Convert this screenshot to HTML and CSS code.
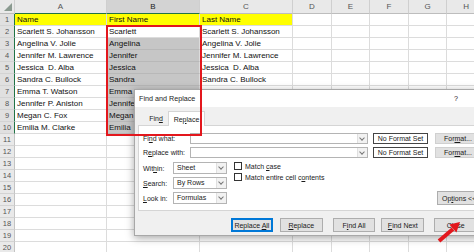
FILE: index.html
```html
<!DOCTYPE html>
<html lang="en">
<head>
	<meta name="viewport" content="width=device-width, initial-scale=1">
	<title>Find and Replace</title>
	<link rel="stylesheet" href="styles.css">
</head>
<body>

<table class="sheet">
	<colgroup>
		<col class="c-hd"><col class="c-wide"><col class="c-wide"><col class="c-wide">
		<col class="c-nar"><col class="c-nar"><col class="c-nar"><col class="c-nar"><col class="c-nar"><col class="c-last">
	</colgroup>
	<thead>
		<tr>
			<th class="corner"><span class="tri"></span></th>
			<th class="sel">A</th><th class="sel dark">B</th><th>C</th><th>D</th><th>E</th><th>F</th><th>G</th><th>H</th><th></th>
		</tr>
	</thead>
	<tbody>
		<tr class="on"><th>1</th><td class="hl">Name</td><td class="hl">First Name</td><td class="hl">Last Name</td><td></td><td></td><td></td><td></td><td></td><td></td></tr>
		<tr class="on"><th>2</th><td>Scarlett S. Johansson</td><td>Scarlett</td><td>Scarlett S. Johansson</td><td></td><td></td><td></td><td></td><td></td><td></td></tr>
		<tr class="on"><th>3</th><td>Angelina V. Jolie</td><td class="pick">Angelina</td><td>Angelina V. Jolie</td><td></td><td></td><td></td><td></td><td></td><td></td></tr>
		<tr class="on"><th>4</th><td>Jennifer M. Lawrence</td><td class="pick">Jennifer</td><td>Jennifer M. Lawrence</td><td></td><td></td><td></td><td></td><td></td><td></td></tr>
		<tr class="on"><th>5</th><td>Jessica  D. Alba</td><td class="pick">Jessica</td><td>Jessica  D. Alba</td><td></td><td></td><td></td><td></td><td></td><td></td></tr>
		<tr class="on"><th>6</th><td>Sandra C. Bullock</td><td class="pick">Sandra</td><td>Sandra C. Bullock</td><td></td><td></td><td></td><td></td><td></td><td></td></tr>
		<tr class="on"><th>7</th><td>Emma T. Watson</td><td class="pick">Emma</td><td>Emma T. Watson</td><td></td><td></td><td></td><td></td><td></td><td></td></tr>
		<tr class="on"><th>8</th><td>Jennifer P. Aniston</td><td class="pick">Jennifer</td><td>Jennifer P. Aniston</td><td></td><td></td><td></td><td></td><td></td><td></td></tr>
		<tr class="on"><th>9</th><td>Megan C. Fox</td><td class="pick">Megan</td><td>Megan C. Fox</td><td></td><td></td><td></td><td></td><td></td><td></td></tr>
		<tr class="on"><th>10</th><td>Emilia M. Clarke</td><td class="pick">Emilia</td><td>Emilia M. Clarke</td><td></td><td></td><td></td><td></td><td></td><td></td></tr>
		<tr><th>11</th><td></td><td></td><td></td><td></td><td></td><td></td><td></td><td></td><td></td></tr>
		<tr><th>12</th><td></td><td></td><td></td><td></td><td></td><td></td><td></td><td></td><td></td></tr>
		<tr><th>13</th><td></td><td></td><td></td><td></td><td></td><td></td><td></td><td></td><td></td></tr>
		<tr><th>14</th><td></td><td></td><td></td><td></td><td></td><td></td><td></td><td></td><td></td></tr>
		<tr><th>15</th><td></td><td></td><td></td><td></td><td></td><td></td><td></td><td></td><td></td></tr>
		<tr><th>16</th><td></td><td></td><td></td><td></td><td></td><td></td><td></td><td></td><td></td></tr>
		<tr><th>17</th><td></td><td></td><td></td><td></td><td></td><td></td><td></td><td></td><td></td></tr>
		<tr><th>18</th><td></td><td></td><td></td><td></td><td></td><td></td><td></td><td></td><td></td></tr>
		<tr><th>19</th><td></td><td></td><td></td><td></td><td></td><td></td><td></td><td></td><td></td></tr>
		<tr><th>20</th><td></td><td></td><td></td><td></td><td></td><td></td><td></td><td></td><td></td></tr>
	</tbody>
</table>

<div class="dialog">
	<div class="dlg-title">
		<span>Find and Replace</span>
		<span class="help">?</span>
	</div>
	<div class="dlg-body">
		<div class="tabs">
			<span class="tab"><span>Fin<u>d</u></span></span>
			<span class="tab active"><span>Re<u>p</u>lace</span></span>
		</div>
		<div class="panel">
			<div class="field">
				<span class="lbl">Fi<u>n</u>d what:</span>
				<span class="combo"><span class="arrow"></span></span>
				<span class="nofmt">No Format Set</span>
				<span class="btn fmt"><span>For<u>m</u>at...</span></span>
			</div>
			<div class="field">
				<span class="lbl">R<u>e</u>place with:</span>
				<span class="combo"><span class="arrow"></span></span>
				<span class="nofmt">No Format Set</span>
				<span class="btn fmt"><span>For<u>m</u>at...</span></span>
			</div>
			<div class="opts">
				<div class="selects">
					<span class="lbl">Wit<u>h</u>in:</span>
					<span class="select">Sheet<span class="arrow"></span></span>
					<span class="lbl"><u>S</u>earch:</span>
					<span class="select">By Rows<span class="arrow"></span></span>
					<span class="lbl"><u>L</u>ook in:</span>
					<span class="select">Formulas<span class="arrow"></span></span>
				</div>
				<div class="checks">
					<span class="check"><span class="box"></span><span>Match <u>c</u>ase</span></span>
					<span class="check"><span class="box"></span><span>Match entire cell c<u>o</u>ntents</span></span>
				</div>
				<span class="btn options"><span>Op<u>t</u>ions &lt;&lt;</span></span>
			</div>
		</div>
		<div class="actions">
			<span class="btn default"><span>Replace <u>A</u>ll</span></span>
			<span class="btn"><span><u>R</u>eplace</span></span>
			<span class="btn gap"><span>F<u>i</u>nd All</span></span>
			<span class="btn"><span><u>F</u>ind Next</span></span>
			<span class="btn gap"><span>Close</span></span>
		</div>
	</div>
</div>

<div class="mark"></div>

<svg class="pointer" width="40" height="36" viewBox="0 0 40 36">
	<line x1="9" y1="26" x2="23" y2="14" stroke="#e3171d" stroke-width="4"/>
	<polygon points="30,7 26.4,17.6 19.3,9.6" fill="#e3171d"/>
</svg>

</body>
</html>
```

FILE: styles.css
```css
* {
	box-sizing: border-box;
	margin: 0;
	padding: 0;
}

body {
	width: 474px;
	height: 252px;
	overflow: hidden;
	position: relative;
	background: #fff;
	font-family: 'Liberation Sans', Arial, sans-serif;
	color: #111;
}

/* spreadsheet */

.sheet {
	border-collapse: separate;
	border-spacing: 0;
	table-layout: fixed;
	width: 510px;
	font-size: 8px;
}

.c-hd { width: 15px; }
.c-wide { width: 92px; }
.c-wide + .c-wide { width: 93px; }
.c-nar { width: 38.6px; }
.c-last { width: 63px; }

.sheet td,
.sheet th {
	height: 12px;
	padding: 0 2px;
	border-right: 1px solid #dcdcdc;
	border-bottom: 1px solid #dcdcdc;
	white-space: pre;
	overflow: hidden;
	text-align: left;
	font-weight: normal;
	line-height: 11px;
}

.sheet thead th {
	height: 14px;
	background: #e9e9e9;
	color: #555;
	text-align: center;
	border-right-color: #cfcfcf;
	border-bottom: 1px solid #bdbdbd;
}

.sheet thead th.sel {
	border-bottom: 1px solid #217346;
}

.sheet thead th.dark {
	background: #d3d3d3;
	color: #222;
}

.sheet .corner {
	position: relative;
}

.tri {
	position: absolute;
	right: 2px;
	bottom: 2px;
	border-left: 8px solid transparent;
	border-bottom: 8px solid #8a9a90;
}

.sheet tbody th {
	background: #e9e9e9;
	color: #555;
	text-align: center;
	font-size: 7.5px;
	padding: 0;
	border-right-color: #c4c4c4;
	border-bottom-color: #d3d3d3;
}

.sheet tr.on th {
	background: #e0e0e0;
	border-right: 1px solid #217346;
}

.sheet td.hl {
	background: #ffff00;
}

.sheet td.pick {
	background: #c6c6c6;
	border-bottom-color: #b8b8b8;
}

/* dialog */

.dialog {
	position: absolute;
	left: 134px;
	top: 89px;
	width: 350px;
	height: 147px;
	display: flex;
	flex-direction: column;
	background: #f0f0f0;
	border: 1px solid #a8a8a8;
	box-shadow: 0 2px 8px rgba(0,0,0,0.35);
	font-size: 7px;
	color: #1a1a1a;
}

.dlg-title {
	height: 17px;
	display: flex;
	align-items: center;
	justify-content: space-between;
	padding: 0 25px 0 4px;
	background: #fff;
	font-size: 7.2px;
	color: #222;
}

.dlg-body {
	flex: 1;
	padding-left: 3px;
}

.tabs {
	height: 18px;
	display: flex;
	align-items: flex-end;
	padding-left: 6px;
}

.tab {
	height: 14px;
	width: 24px;
	display: flex;
	align-items: center;
	justify-content: center;
}

.tab.active {
	width: 37px;
	height: 15px;
	margin-bottom: -1px;
	background: #fff;
	border: 1px solid #d5d5d5;
	border-bottom: none;
	position: relative;
}

.panel {
	height: 86px;
	padding: 7px 0 0 4px;
	background: #fff;
	border: 1px solid #d5d5d5;
	border-right: none;
}

.field {
	height: 11px;
	margin-bottom: 3px;
	display: flex;
	align-items: center;
}

.field .lbl {
	width: 47px;
}

.combo,
.select {
	position: relative;
	height: 11px;
	border: 1px solid #b4b4b4;
	background: #fff;
}

.combo {
	width: 178px;
}

.arrow {
	position: absolute;
	right: 0;
	top: 0;
	bottom: 0;
	width: 10px;
	background: #f2f2f2;
	border-left: 1px solid #e0e0e0;
}

.arrow::after {
	content: '';
	position: absolute;
	left: 2px;
	top: 2px;
	width: 3px;
	height: 3px;
	border-right: 1px solid #777;
	border-bottom: 1px solid #777;
	transform: rotate(45deg);
}

.nofmt {
	width: 55px;
	height: 11px;
	margin-left: 5px;
	border: 1px solid #444;
	display: flex;
	align-items: center;
	justify-content: center;
}

.btn {
	height: 14px;
	display: flex;
	align-items: center;
	justify-content: center;
	background: #e1e1e1;
	border: 1px solid #adadad;
	white-space: nowrap;
}

.btn.fmt {
	width: 46px;
	height: 11px;
	margin-left: 7px;
	border-color: #d0d0d0;
}

.opts {
	display: flex;
	align-items: flex-start;
	margin-top: 4px;
}

.selects {
	display: grid;
	grid-template-columns: 30px 54px;
	row-gap: 3px;
	align-items: center;
}

.select {
	height: 12px;
	padding-left: 3px;
	line-height: 10px;
}

.checks {
	display: flex;
	flex-direction: column;
	gap: 3px;
	margin-left: 7px;
}

.check {
	display: flex;
	align-items: center;
	height: 8px;
	gap: 3px;
}

.box {
	width: 8px;
	height: 8px;
	border: 1px solid #333;
	background: #fff;
}

.btn.options {
	width: 46px;
	margin: 29px 0 0 auto;
	justify-content: flex-start;
	padding-left: 4px;
}

.actions {
	display: flex;
	padding: 7px 0 0 93px;
}

.actions .btn {
	width: 45px;
	margin-right: 6px;
}

.actions .btn.default {
	width: 44px;
	margin-right: 7px;
	border: 1px solid #0078d7;
	box-shadow: inset 0 0 0 1px #0078d7;
}

.actions .btn.gap {
	margin-left: 4px;
}

/* annotations */

.mark {
	position: absolute;
	left: 106px;
	top: 25px;
	width: 96px;
	height: 111px;
	border: 2px solid #e3171d;
}

.pointer {
	position: absolute;
	left: 430px;
	top: 215px;
}
```
